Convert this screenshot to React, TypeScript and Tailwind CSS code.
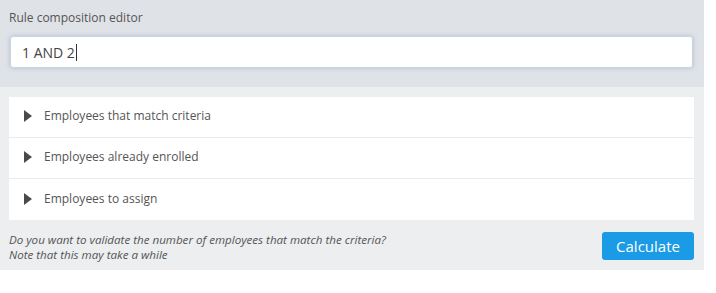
import React from 'react';

const rows = [
  'Employees that match criteria',
  'Employees already enrolled',
  'Employees to assign',
];

const App: React.FC = () => {
  const rule = '1 AND 2';

  return (
    <div className="w-[716px] h-[293px] bg-white" style={{ fontFamily: '"Open Sans", "Noto Sans", sans-serif' }}>
      <div className="w-[704px]">
        <div className="bg-[#dfe2e6] h-[87px] pt-[9px] px-[10px]">
          <label className="block text-[12px] leading-[18px] text-[#555] ml-[-1px]">Rule composition editor</label>
          <div className="mt-[9px] h-[32px] w-[683px] bg-white rounded-[3px] border border-[#c9d3de] shadow-[0_0_4px_rgba(140,170,205,0.6)] flex items-center pl-[11px]">
            <span className="text-[14px] text-[#444]">{rule}</span>
            <span className="w-px h-[17px] bg-[#333] ml-[1px]" />
          </div>
        </div>

        <div className="bg-[#eceef0] h-[183px] pt-[10px] px-[9px]">
          <div className="bg-white w-[685px]">
            {rows.map((r, i) => (
              <div
                key={r}
                className={`h-[41px] flex items-center pl-[15px] ${i < rows.length - 1 ? 'border-b border-[#ebebeb]' : ''}`}
              >
                <svg width="8" height="12" viewBox="0 0 8 12" className="mr-[12px] -mt-[2px]">
                  <polygon points="0,0 8,6 0,12" fill="#4a4a4a" />
                </svg>
                <span className="text-[12px] text-[#555] -mt-[2px]">{r}</span>
              </div>
            ))}
          </div>

          <div className="flex items-start justify-between mt-[12px]">
            <p className="text-[11.6px] leading-[15px] italic text-[#555]">
              Do you want to validate the number of employees that match the criteria?
              <br />
              Note that this may take a while
            </p>
            <button className="h-[28px] w-[92px] rounded-[3px] bg-[#1b9be6] text-white text-[15px] mr-[1px]">
              Calculate
            </button>
          </div>
        </div>
      </div>
    </div>
  );
};

export default App;
